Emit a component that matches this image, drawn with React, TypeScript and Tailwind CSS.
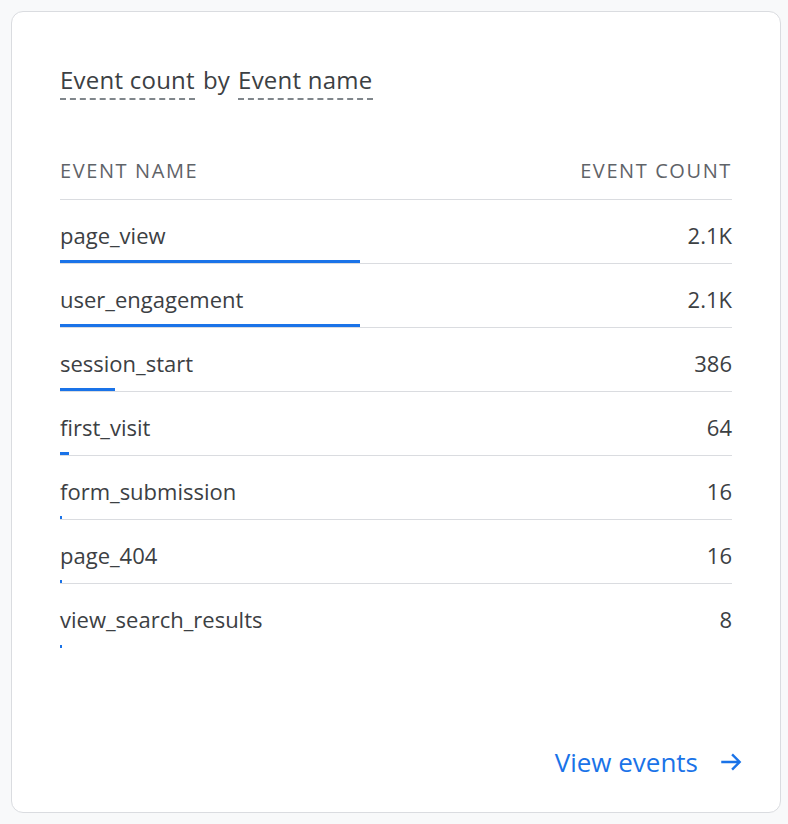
import React from "react";

const rows = [
  ["page_view", "2.1K", 300],
  ["user_engagement", "2.1K", 300],
  ["session_start", "386", 55],
  ["first_visit", "64", 9],
  ["form_submission", "16", 2],
  ["page_404", "16", 2],
  ["view_search_results", "8", 2],
] as const;

export default function App() {
  return (
    <div className="min-h-[824px] bg-[#f8f9fa] pt-[11px] pl-[11px] pr-[8px] pb-[11px]" style={{ fontFamily: "'Open Sans', Roboto, sans-serif" }}>
      <div className="h-[802px] w-[770px] rounded-[12px] border border-[#dadce0] bg-white px-[48px] pt-[52px] flex flex-col">
        <div className="flex items-start gap-[8px] text-[24px] leading-[32px] tracking-[0.01em] text-[#3c4043]">
          <span className="border-b-2 border-dashed border-[#80868b] pb-[2px]">Event count</span>
          <span>by</span>
          <span className="border-b-2 border-dashed border-[#80868b] pb-[2px]">Event name</span>
        </div>
        <div className="mt-[57px] flex justify-between border-b border-[#dadce0] pb-[14px] text-[20px] leading-[28px] tracking-[0.08em] text-[#5f6368] font-medium">
          <span>EVENT NAME</span>
          <span>EVENT COUNT</span>
        </div>
        {rows.map(([n, c, w], i) => (
          <div key={n} className={`relative h-[64px] pt-[22px] ${i < rows.length - 1 ? "border-b border-[#dadce0]" : ""}`}>
            <div className="flex justify-between text-[22px] leading-[26px] text-[#3c4043]">
              <span className="font-medium">{n}</span>
              <span>{c}</span>
            </div>
            <div className="absolute left-0 bottom-0 h-[3px] bg-[#1a73e8]" style={{ width: w }} />
          </div>
        ))}
        <div className="mt-auto mb-[34px] flex justify-end items-center gap-[20px] pr-[-10px] mr-[-12px] text-[#1a73e8] text-[26px] leading-[32px]">
          <span>View events</span>
          <svg width="26" height="26" viewBox="0 0 24 24" fill="none" stroke="#1a73e8" strokeWidth="2.2"><path d="M3 12h17M13 5l7 7-7 7" /></svg>
        </div>
      </div>
    </div>
  );
}
